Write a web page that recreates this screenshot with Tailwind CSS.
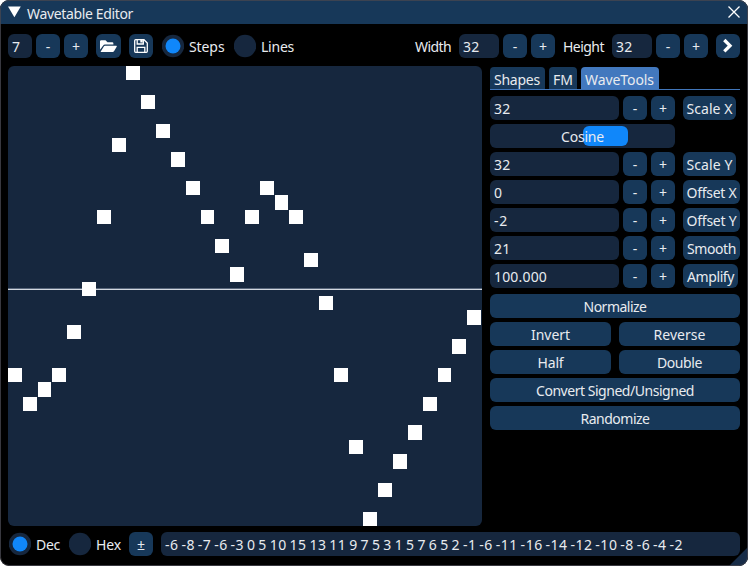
<!DOCTYPE html>
<html lang="en">
<head>
<meta charset="utf-8">
<title>Wavetable Editor</title>
<script src="https://cdn.jsdelivr.net/npm/@tailwindcss/browser@4"></script>
</head>
<body class="bg-white">
<main class="relative flex h-[566px] w-[748px] flex-col overflow-hidden rounded-[9px] bg-black font-['Noto_Sans',sans-serif] text-[14px] leading-[25px] text-[#e8ebef] whitespace-nowrap [&_button]:block [&_button]:h-6 [&_button]:shrink-0 [&_button]:rounded-md [&_button]:bg-[#173859] [&_b]:inline-block [&_b]:align-top [&_b]:font-normal">
  <header class="flex h-6 shrink-0 items-center bg-[#173859] pl-2 pr-[8px]">
    <svg class="w-[13px] h-6" viewBox="0 0 13 24"><path d="M0 6.500h12.800L6.400 17.300z" fill="#fff"/></svg>
    <h1 class="ml-[6px] h-6 pt-px"><b data-w="106">Wavetable Editor</b></h1>
    <svg class="ml-auto w-3 h-6" viewBox="0 0 12 24"><path d="M.5 6.500l11 11M11.500 6.500l-11 11" stroke="#fff" stroke-width="1.300"/></svg>
  </header>

  <div class="mt-[10px] flex h-6 shrink-0 px-2">
    <div class="w-6 rounded-md bg-[#16273e] pl-[4px]"><b data-w="8">7</b></div>
    <button class="ml-1 w-6">-</button>
    <button class="ml-1 w-6">+</button>
    <button class="ml-2 w-[25px]" aria-label="Open"><svg class="h-6 w-[25px]" viewBox="0 0 25 24" fill="#fff"><path d="M4 15.700V7.500Q4 6.300 5.200 6.300H9.500L11.500 8.200H16.200Q17.400 8.200 17.400 9.400V10.600H9Q7.800 10.600 7.200 11.600ZM4.600 17.800L8 12.300Q8.300 11.800 9 11.800H20.200Q21.200 11.800 20.700 12.700L18 17.200Q17.500 18 16.600 18H5Z"/></svg></button>
    <button class="ml-2 w-6" aria-label="Save"><svg class="h-6 w-6" viewBox="0 0 24 24" fill="none" stroke="#fff" stroke-width="1.300"><path d="M6.700 5.700H15L18.300 9V17.300Q18.300 18.300 17.300 18.300H6.700Q5.700 18.300 5.700 17.300V6.700Q5.700 5.700 6.700 5.700Z"/><path d="M8.200 18V13.300H15.800V18M8.200 6V10H14.300V6"/><path d="M11.300 6h2.400v2.600h-2.400z" fill="#fff" stroke="none"/></svg></button>
    <label class="ml-[9px] flex"><svg class="w-[22px] h-6" viewBox="0 0 22 24"><circle cx="11" cy="12" r="11.200" fill="#16273e"/><circle cx="11" cy="12" r="7.500" fill="#1087fa"/></svg><b class="ml-[5px] w-[35px]" data-w="35.500">Steps</b></label>
    <label class="ml-[10px] flex"><svg class="w-[22px] h-6" viewBox="0 0 22 24"><circle cx="11" cy="12" r="11.200" fill="#16273e"/></svg><b class="ml-[5px]" data-w="33">Lines</b></label>
    <div class="ml-auto flex">
      <b class="w-[36px]" data-w="36">Width</b>
      <div class="ml-2 w-10 rounded-md bg-[#16273e] pl-1"><b data-w="16.500">32</b></div>
      <button class="ml-1 w-6">-</button>
      <button class="ml-1 w-6">+</button>
      <b class="ml-2 w-[41px]" data-w="41">Height</b>
      <div class="ml-2 w-10 rounded-md bg-[#16273e] pl-1"><b data-w="16.500">32</b></div>
      <button class="ml-1 w-6">-</button>
      <button class="ml-1 w-6">+</button>
      <button class="ml-2 w-6" aria-label="Next"><svg class="h-6 w-6" viewBox="0 0 24 24"><path d="M8.300 6l5.700 5.700-5.700 5.700" fill="none" stroke="#fff" stroke-width="3.300"/></svg></button>
    </div>
  </div>

  <div class="mt-2 flex h-[460px] shrink-0 gap-2 px-2">
    <svg class="w-[474px] shrink-0 rounded-md bg-[#16273e]" id="wave" viewBox="0 0 474 460" shape-rendering="crispEdges"><path d="M0 222h474v1H0z" fill="#59677c"/><path d="M0 223h474v1H0z" fill="#d3d8e0"/></svg>

    <section class="w-[250px] shrink-0 pt-px">
      <nav class="flex h-[23px] gap-1 border-b border-[#4176ba] [&>div]:h-[22px] [&>div]:rounded-t [&>div]:pl-1">
        <div class="w-[55px] bg-[#173859]"><b data-w="46">Shapes</b></div>
        <div class="w-[28px] bg-[#173859]"><b data-w="20">FM</b></div>
        <div class="w-[78px] bg-[#4278be]"><b data-w="69">WaveTools</b></div>
      </nav>
      <div class="mt-[6px] flex flex-col gap-1 [&>.r]:flex [&>.r]:gap-1 [&_.f]:h-6 [&_.f]:w-[129px] [&_.f]:rounded-md [&_.f]:bg-[#16273e] [&_.f]:pl-1 [&>.r]:h-6">
        <div class="r"><div class="f"><b data-w="16.500">32</b></div><button class="w-6">-</button><button class="w-6">+</button><button class="ml-1 w-[53px]"><b data-w="46">Scale X</b></button></div>
        <div class="relative h-6 w-[185px] rounded-md bg-[#16273e] text-center"><span class="absolute left-[93px] top-[2px] h-5 w-[45px] rounded-md bg-[#1087fa]"></span><b class="relative" data-w="43">Cosine</b></div>
        <div class="r"><div class="f"><b data-w="16.500">32</b></div><button class="w-6">-</button><button class="w-6">+</button><button class="ml-1 w-[53px]"><b data-w="46">Scale Y</b></button></div>
        <div class="r"><div class="f"><b data-w="8">0</b></div><button class="w-6">-</button><button class="w-6">+</button><button class="ml-1 w-[57px]"><b data-w="50">Offset X</b></button></div>
        <div class="r"><div class="f"><b data-w="14">-2</b></div><button class="w-6">-</button><button class="w-6">+</button><button class="ml-1 w-[57px]"><b data-w="50">Offset Y</b></button></div>
        <div class="r"><div class="f"><b data-w="16.500">21</b></div><button class="w-6">-</button><button class="w-6">+</button><button class="ml-1 w-[57px]"><b data-w="49">Smooth</b></button></div>
        <div class="r"><div class="f"><b data-w="53">100.000</b></div><button class="w-6">-</button><button class="w-6">+</button><button class="ml-1 w-[55px]"><b data-w="47">Amplify</b></button></div>
      </div>
      <div class="mt-[6px] grid grid-cols-2 gap-x-2 gap-y-1">
        <button class="col-span-2"><b data-w="63">Normalize</b></button>
        <button><b data-w="39">Invert</b></button>
        <button><b data-w="52">Reverse</b></button>
        <button><b data-w="26">Half</b></button>
        <button><b data-w="45">Double</b></button>
        <button class="col-span-2"><b data-w="158">Convert Signed/Unsigned</b></button>
        <button class="col-span-2"><b data-w="69">Randomize</b></button>
      </div>
    </section>
  </div>

  <footer class="mt-[6px] flex h-6 shrink-0 pl-[9px] pr-2">
    <label class="flex"><svg class="w-[22px] h-6" viewBox="0 0 22 24"><circle cx="11" cy="12" r="11.200" fill="#16273e"/><circle cx="11" cy="12" r="7.500" fill="#1087fa"/></svg><b class="ml-[5px] w-[25px]" data-w="24">Dec</b></label>
    <label class="ml-2 flex"><svg class="w-[22px] h-6" viewBox="0 0 22 24"><circle cx="11" cy="12" r="11.200" fill="#16273e"/></svg><b class="ml-[5px] w-[25px]" data-w="25">Hex</b></label>
    <button class="ml-2 w-6">±</button>
    <div class="ml-2 flex-1 rounded-md bg-[#16273e] pl-1"><b id="values" class="[word-spacing:-1.3px]" data-w="518"></b></div>
  </footer>
  <svg class="absolute bottom-0 right-0 h-[19px] w-[19px]" viewBox="0 0 19 19"><path d="M0 19L19 0V19z" fill="#172c47"/></svg>
  <div class="pointer-events-none absolute inset-0 rounded-[9px] border border-[#46464f]/80"></div>
</main>
<script>
const samples = [-6,-8,-7,-6,-3,0,5,10,15,13,11,9,7,5,3,1,5,7,6,5,2,-1,-6,-11,-16,-14,-12,-10,-8,-6,-4,-2];
document.getElementById('values').textContent = samples.join(' ');
const stepX = 474 / 32, stepY = 460 / 32;
samples.forEach((v, i) => {
  const r = document.createElementNS('http://www.w3.org/2000/svg', 'rect');
  const x = Math.round(i * stepX - 0.01), y = Math.round((15 - v) * stepY);
  r.setAttribute('x', x);
  r.setAttribute('y', y);
  r.setAttribute('width', Math.round((i + 1) * stepX - 1) - x);
  r.setAttribute('height', Math.round((16 - v) * stepY) - y);
  r.setAttribute('fill', '#fff');
  document.getElementById('wave').append(r);
});
// Even out the tracking so each label takes its intended width.
function fitLabels() {
  document.querySelectorAll('[data-w]').forEach(el => {
    const range = document.createRange();
    range.selectNodeContents(el);
    let spacing = 0;
    for (let pass = 0; pass < 4; pass++) {
      spacing += (el.dataset.w - range.getBoundingClientRect().width) / el.textContent.length;
      spacing = Math.max(-0.8, Math.min(0.8, spacing));
      el.style.letterSpacing = spacing.toFixed(3) + 'px';
    }
  });
}
window.addEventListener('load', fitLabels);
</script>
</body>
</html>
